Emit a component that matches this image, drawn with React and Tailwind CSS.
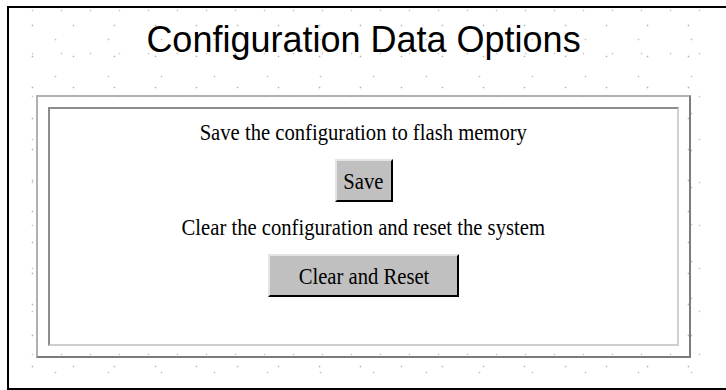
export default function App() {
  const serif = "font-['Liberation_Serif','Times_New_Roman',serif]";

  return (
    <div className="w-[726px] h-[390px] overflow-hidden bg-white">
      <div className="ml-[7px] mt-[6px] w-[760px] h-[384px] border-2 border-black bg-white bg-[radial-gradient(circle,#b8b8b8_0.8px,transparent_1.1px),radial-gradient(circle,#c4c4c4_0.8px,transparent_1.1px),radial-gradient(circle,#cccccc_0.8px,transparent_1.1px)] bg-[length:41px_31px,53px_37px,29px_43px] bg-[position:3px_2px,20px_13px,9px_24px]">
        {/* Title */}
        <div className="ml-[27px] w-[655px] pt-[11px] text-center">
          <h1 className="font-['Liberation_Sans',Arial,sans-serif] text-[36px] leading-[41px] text-black">
            Configuration Data Options
          </h1>
        </div>

        {/* Group frame */}
        <div className="ml-[27px] mt-[35px] w-[655px] h-[263px] border-2 border-[#b0b0b0] border-b-[#7c7c7c] border-r-[#7c7c7c] p-[10px]">
          <div className="h-full border-2 border-[#8c8c8c] border-b-[#cfcfcf] border-r-[#cfcfcf] bg-white pt-[10px] flex flex-col items-center">
            <p className={`${serif} text-[24px] leading-[26px] text-black whitespace-nowrap scale-x-[0.86]`}>
              Save the configuration to flash memory
            </p>
            <button className={`${serif} mt-[14px] w-[58px] h-[43px] bg-[#c0c0c0] border-2 border-[#e4e4e4] border-b-black border-r-black text-black`}>
              <span className="inline-block text-[24px] scale-x-[0.86]">Save</span>
            </button>
            <p className={`${serif} mt-[12px] text-[24px] leading-[26px] text-black whitespace-nowrap scale-x-[0.86]`}>
              Clear the configuration and reset the system
            </p>
            <button className={`${serif} mt-[14px] w-[191px] h-[43px] bg-[#c0c0c0] border-2 border-[#e4e4e4] border-b-black border-r-black text-black`}>
              <span className="inline-block text-[24px] scale-x-[0.86] whitespace-nowrap">Clear and Reset</span>
            </button>
          </div>
        </div>
      </div>
    </div>
  );
}
